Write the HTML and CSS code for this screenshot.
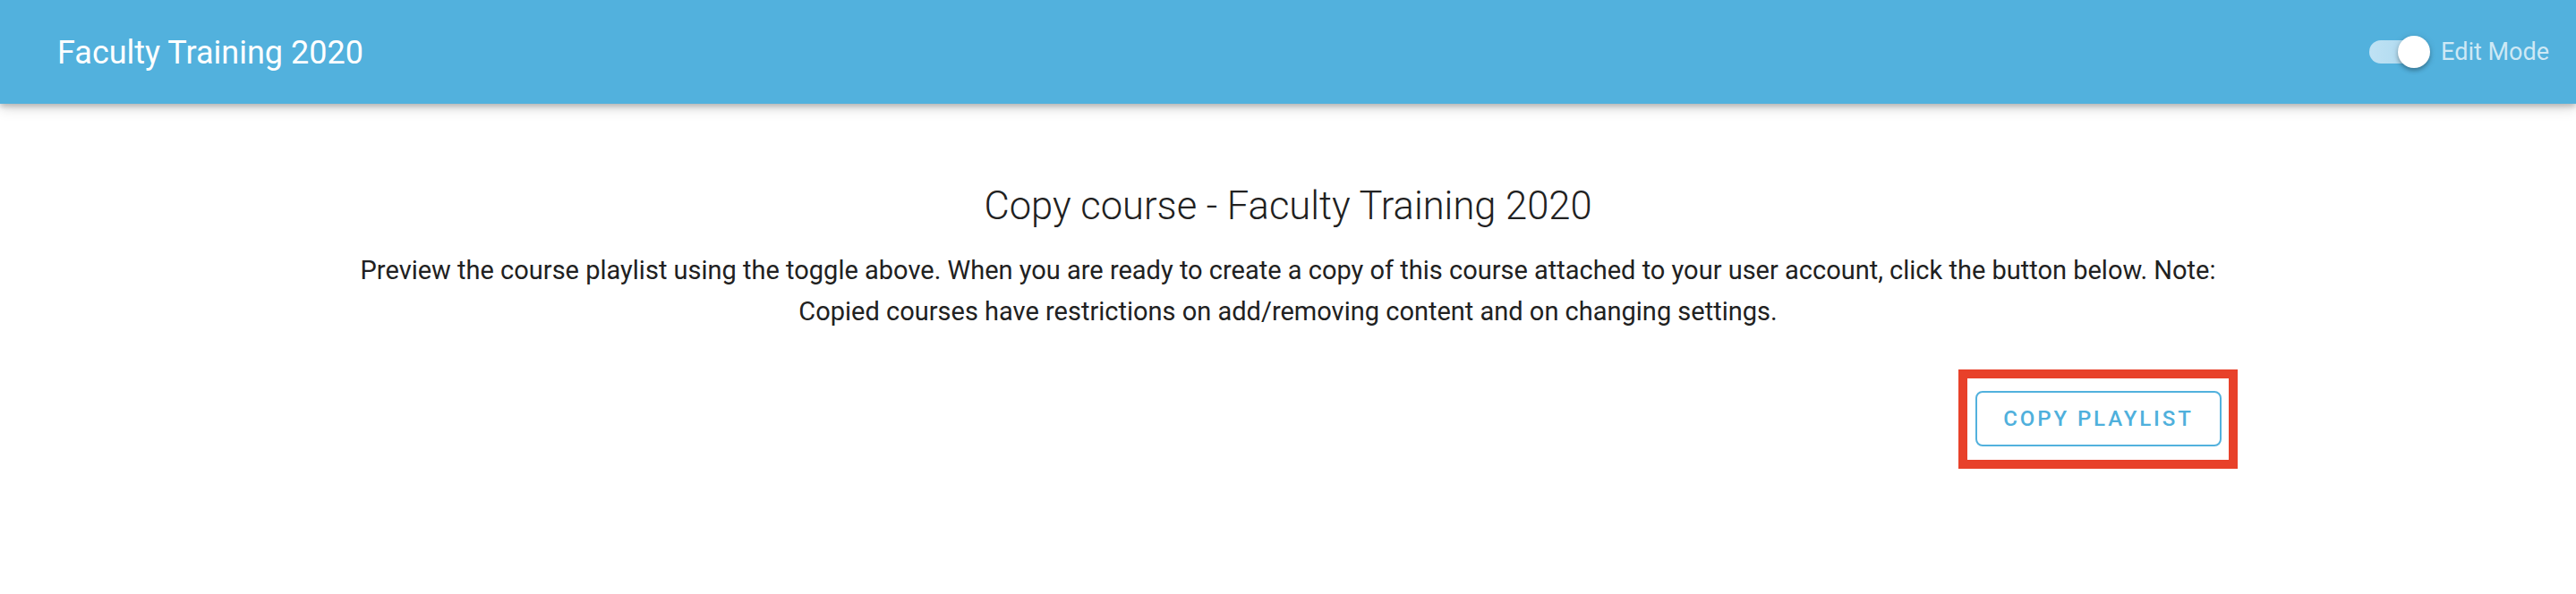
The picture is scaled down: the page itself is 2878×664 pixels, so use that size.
FILE: index.html
```html
<!DOCTYPE html>
<html lang="en">
<head>
<meta charset="utf-8">
<title>Faculty Training 2020</title>
<link rel="stylesheet" href="styles.css">
</head>
<body>
<header class="toolbar">
  <div class="toolbar-title">Faculty Training 2020</div>
  <label class="mode-switch">
    <span class="switch-track"><span class="switch-knob"></span></span>
    <span class="switch-label">Edit Mode</span>
  </label>
</header>
<main class="content">
  <h1 class="page-heading">Copy course - Faculty Training 2020</h1>
  <p class="page-text">Preview the course playlist using the toggle above. When you are ready to create a copy of this course attached to your user account, click the button below. Note: Copied courses have restrictions on add/removing content and on changing settings.</p>
  <div class="actions">
    <div class="highlight">
      <button class="outline-btn" type="button">Copy Playlist</button>
    </div>
  </div>
</main>
</body>
</html>
```

FILE: styles.css
```css
html, body {
  margin: 0;
  padding: 0;
  background: #ffffff;
}

body {
  font-family: Roboto, "Liberation Sans", Arial, sans-serif;
  color: #212121;
}

.toolbar {
  height: 116px;
  background: #52b1dd;
  display: flex;
  align-items: center;
  justify-content: space-between;
  padding: 0 30px 0 64px;
  box-shadow: 0 3px 6px rgba(0, 0, 0, 0.22), 0 6px 14px rgba(0, 0, 0, 0.12);
  position: relative;
  z-index: 1;
}

.toolbar-title {
  color: #ffffff;
  font-size: 36px;
  font-weight: 400;
  line-height: 1;
  padding-top: 2px;
}

.mode-switch {
  display: flex;
  align-items: center;
  gap: 12px;
}

.switch-track {
  position: relative;
  display: block;
  width: 62px;
  height: 26px;
  border-radius: 13px;
  background: linear-gradient(90deg, #bfe2f4 0%, #a9d7ee 100%);
  margin-right: 6px;
}

.switch-knob {
  position: absolute;
  top: -5px;
  right: -6px;
  width: 36px;
  height: 36px;
  border-radius: 50%;
  background: #ffffff;
  box-shadow: 0 3px 4px rgba(0, 0, 0, 0.25), 0 1px 8px rgba(0, 0, 0, 0.12);
}

.switch-label {
  color: rgba(255, 255, 255, 0.72);
  font-size: 27px;
  line-height: 1;
}

.content {
  width: 2086px;
  margin: 0 auto;
}

.page-heading {
  margin: 90px 0 0;
  font-size: 43.5px;
  font-weight: 300;
  line-height: 50px;
  text-align: center;
  color: #212121;
}

.page-text {
  margin: 23px 0 0;
  font-size: 29px;
  line-height: 46px;
  text-align: center;
  color: #212121;
}

.actions {
  display: flex;
  justify-content: flex-end;
  margin-top: 42px;
}

.highlight {
  border: 10px solid #e8412a;
  padding: 14px 8px 15px 9px;
  margin-right: -18px;
  background: #ffffff;
}

.outline-btn {
  display: block;
  width: 275px;
  height: 62px;
  border: 2px solid #52b1dd;
  border-radius: 8px;
  background: #ffffff;
  color: #4fb0dc;
  font-family: Roboto, "Liberation Sans", Arial, sans-serif;
  font-size: 24px;
  font-weight: 500;
  letter-spacing: 2.9px;
  text-transform: uppercase;
  padding: 0;
  cursor: pointer;
}
```
